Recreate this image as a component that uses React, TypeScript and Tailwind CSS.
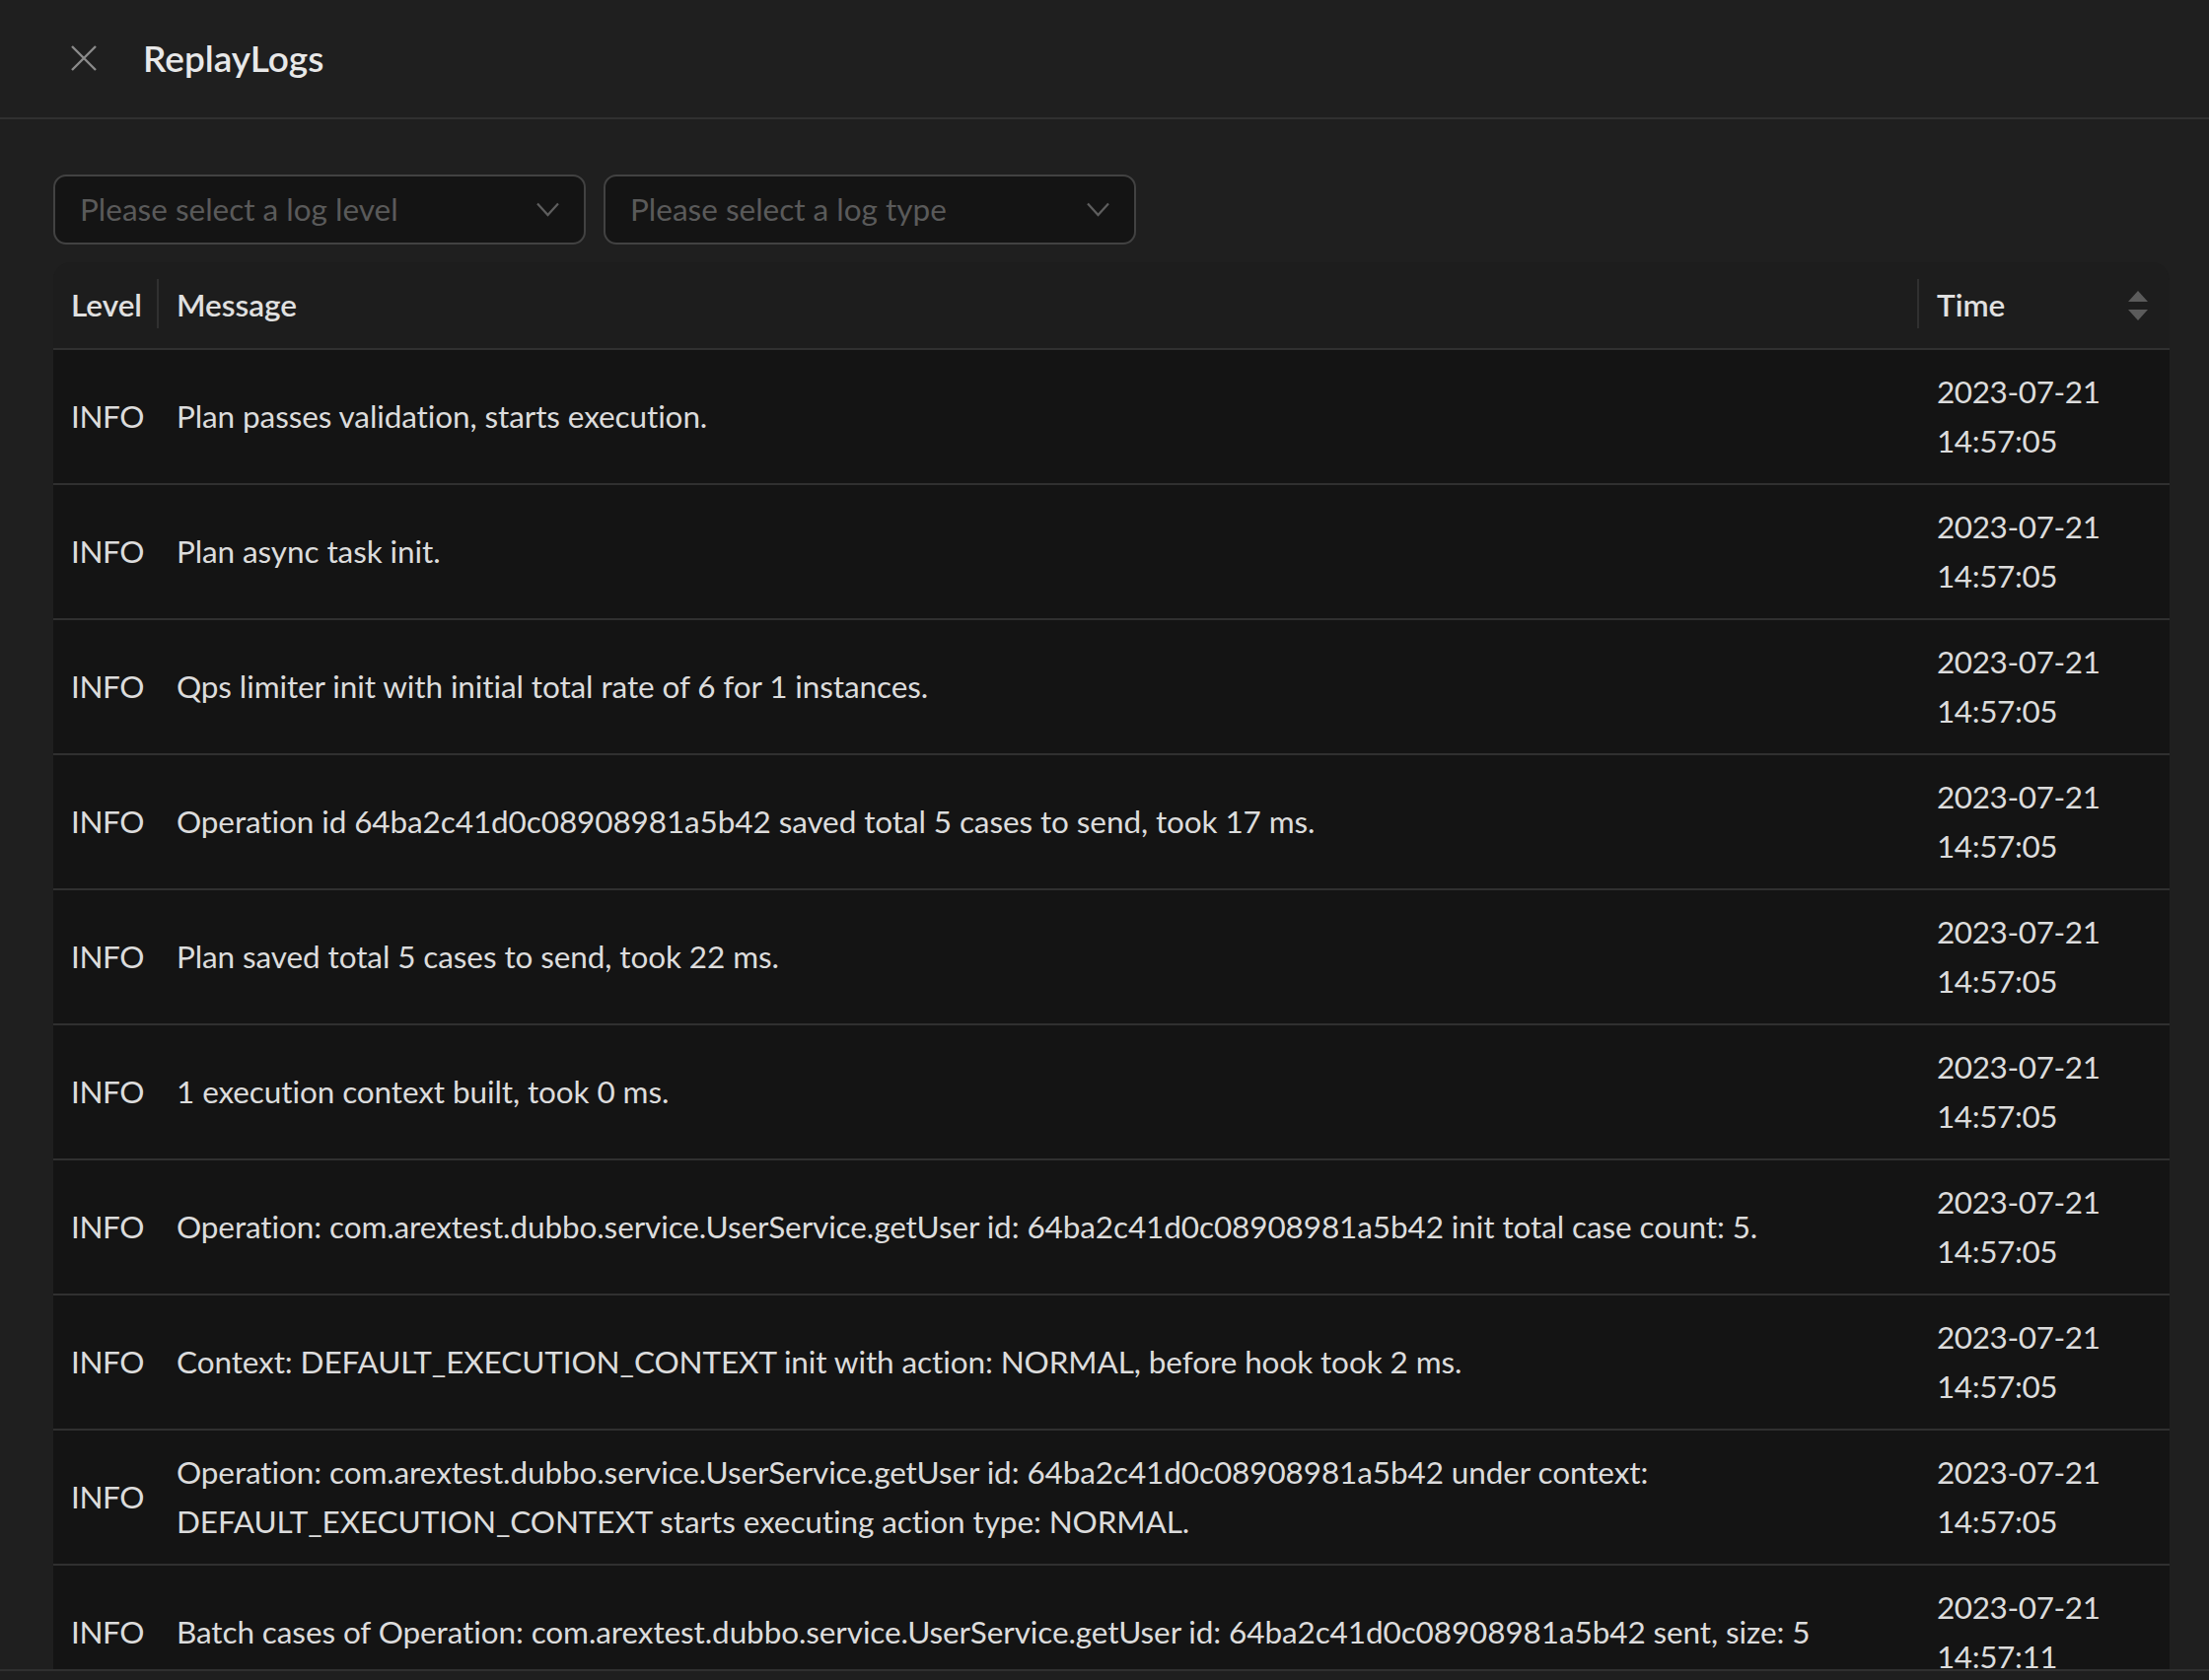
import React from "react"

const FONT = "font-['Lato','Noto_Sans',sans-serif]"

const logs = [
  { level: "INFO", message: "Plan passes validation, starts execution.", time: "2023-07-21 14:57:05" },
  { level: "INFO", message: "Plan async task init.", time: "2023-07-21 14:57:05" },
  { level: "INFO", message: "Qps limiter init with initial total rate of 6 for 1 instances.", time: "2023-07-21 14:57:05" },
  { level: "INFO", message: "Operation id 64ba2c41d0c08908981a5b42 saved total 5 cases to send, took 17 ms.", time: "2023-07-21 14:57:05" },
  { level: "INFO", message: "Plan saved total 5 cases to send, took 22 ms.", time: "2023-07-21 14:57:05" },
  { level: "INFO", message: "1 execution context built, took 0 ms.", time: "2023-07-21 14:57:05" },
  {
    level: "INFO",
    message:
      "Operation: com.arextest.dubbo.service.UserService.getUser id: 64ba2c41d0c08908981a5b42 init total case count: 5.",
    time: "2023-07-21 14:57:05",
  },
  {
    level: "INFO",
    message: "Context: DEFAULT_EXECUTION_CONTEXT init with action: NORMAL, before hook took 2 ms.",
    time: "2023-07-21 14:57:05",
  },
  {
    level: "INFO",
    message:
      "Operation: com.arextest.dubbo.service.UserService.getUser id: 64ba2c41d0c08908981a5b42 under context: DEFAULT_EXECUTION_CONTEXT starts executing action type: NORMAL.",
    time: "2023-07-21 14:57:05",
  },
  {
    level: "INFO",
    message:
      "Batch cases of Operation: com.arextest.dubbo.service.UserService.getUser id: 64ba2c41d0c08908981a5b42 sent, size: 5",
    time: "2023-07-21 14:57:11",
  },
]

function Chevron() {
  return (
    <svg width="23" height="15" viewBox="0 0 23 15" fill="none" className="shrink-0">
      <path d="M1 1.5 L11.5 13 L22 1.5" stroke="#5e5e5e" strokeWidth="2.2" />
    </svg>
  )
}

function Select({ placeholder }: { placeholder: string }) {
  return (
    <div className="w-[540px] h-[71px] rounded-[13px] border-2 border-[#424242] bg-[#141414] flex items-center justify-between pl-[25px] pr-[25px]">
      <span className="text-[31.5px] text-[#5a5a5a]">{placeholder}</span>
      <Chevron />
    </div>
  )
}

function SortIcon() {
  return (
    <svg width="20" height="30" viewBox="0 0 20 30" className="shrink-0 mr-[4px]">
      <path d="M10 0 L20 11 L0 11 Z" fill="#5b5b5b" />
      <path d="M0 19 L20 19 L10 30 Z" fill="#5b5b5b" />
    </svg>
  )
}

export default function App() {
  return (
    <div className={`w-[2240px] h-[1704px] bg-[#1f1f1f] flex flex-col overflow-hidden text-[#dcdcdc] ${FONT}`}>
      {/* Drawer header */}
      <div className="h-[121px] shrink-0 border-b-2 border-[#303030] flex items-center pl-[72px]">
        <svg width="26" height="26" viewBox="0 0 26 26" className="shrink-0 -mt-[2px]">
          <path d="M1 1 L25 25 M25 1 L1 25" stroke="#8a8a8a" strokeWidth="2.4" />
        </svg>
        <span className="ml-[47px] text-[37px] font-semibold text-[#e8e8e8] leading-none -mt-[3px]">ReplayLogs</span>
      </div>

      {/* Drawer body */}
      <div className="h-[1572px] shrink-0 overflow-hidden px-[54px] pt-[56px]">
        <div className="flex gap-[18px]">
          <Select placeholder="Please select a log level" />
          <Select placeholder="Please select a log type" />
        </div>

        <table className="mt-[18px] w-[2146px] table-fixed border-separate border-spacing-0 text-[31.5px] leading-[49.5px]">
          <colgroup>
            <col className="w-[107px]" />
            <col />
            <col className="w-[254px]" />
          </colgroup>
          <thead>
            <tr className="bg-[#1d1d1d]">
              <th className="relative rounded-tl-[18px] h-[89px] px-[18px] text-left font-semibold text-[#e0e0e0] border-b-2 border-[#303030]">
                Level
                <span className="absolute right-0 top-[17px] w-[2px] h-[50px] bg-[#303030]" />
              </th>
              <th className="relative h-[89px] px-[18px] text-left font-semibold text-[#e0e0e0] border-b-2 border-[#303030]">
                Message
                <span className="absolute right-0 top-[17px] w-[2px] h-[50px] bg-[#303030]" />
              </th>
              <th className="rounded-tr-[18px] h-[89px] px-[18px] text-left font-semibold text-[#e0e0e0] border-b-2 border-[#303030]">
                <div className="flex items-center justify-between">
                  <span>Time</span>
                  <SortIcon />
                </div>
              </th>
            </tr>
          </thead>
          <tbody>
            {logs.map((log, i) => (
              <tr key={i} className="bg-[#141414]">
                <td className="px-[18px] py-[18px] align-middle border-b-2 border-[#303030] tracking-[-0.4px]">{log.level}</td>
                <td className="px-[18px] py-[18px] align-middle border-b-2 border-[#303030] tracking-[-0.1px]">{log.message}</td>
                <td className="px-[18px] py-[18px] align-middle border-b-2 border-[#303030] tracking-[-0.4px]">{log.time}</td>
              </tr>
            ))}
          </tbody>
        </table>
      </div>

      {/* Drawer footer edge */}
      <div className="flex-1 border-t-2 border-[#303030] bg-[#1f1f1f]" />
    </div>
  )
}
